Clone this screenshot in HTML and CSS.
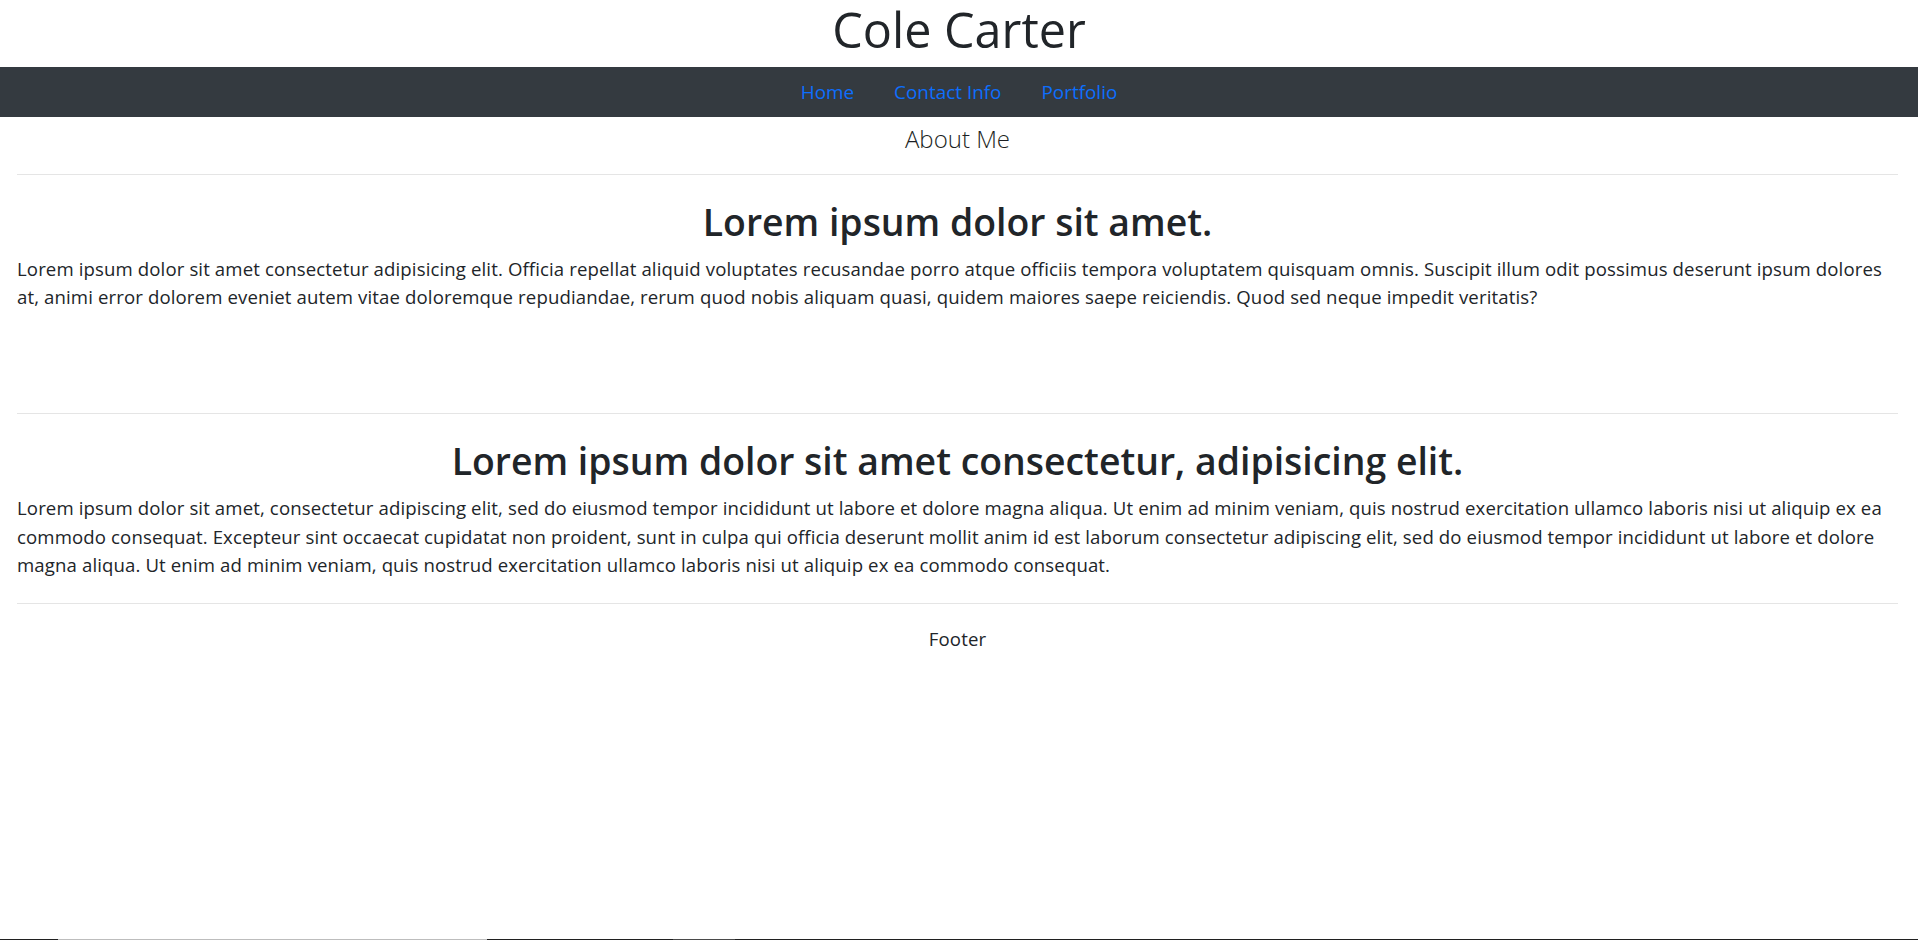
FILE: index.html
```html
<!DOCTYPE html>
<html lang="en">
<head>
<meta charset="utf-8">
<title>Cole Carter</title>
<link rel="stylesheet" href="styles.css">
</head>
<body>
<header class="site-header">
  <h1 class="site-title">Cole Carter</h1>
</header>
<nav class="navbar">
  <a class="nav-link" href="#">Home</a>
  <a class="nav-link" href="#">Contact Info</a>
  <a class="nav-link" href="#">Portfolio</a>
</nav>
<main class="container">
  <p class="lead">About Me</p>
  <hr class="rule">
  <section class="section section-first">
    <h2 class="section-title">Lorem ipsum dolor sit amet.</h2>
    <p class="section-text">Lorem ipsum dolor sit amet consectetur adipisicing elit. Officia repellat aliquid voluptates recusandae porro atque officiis tempora voluptatem quisquam omnis. Suscipit illum odit possimus deserunt ipsum dolores at, animi error dolorem eveniet autem vitae doloremque repudiandae, rerum quod nobis aliquam quasi, quidem maiores saepe reiciendis. Quod sed neque impedit veritatis?</p>
  </section>
  <hr class="rule">
  <section class="section">
    <h2 class="section-title">Lorem ipsum dolor sit amet consectetur, adipisicing elit.</h2>
    <p class="section-text">Lorem ipsum dolor sit amet, consectetur adipiscing elit, sed do eiusmod tempor incididunt ut labore et dolore magna aliqua. Ut enim ad minim veniam, quis nostrud exercitation ullamco laboris nisi ut aliquip ex ea commodo consequat. Excepteur sint occaecat cupidatat non proident, sunt in culpa qui officia deserunt mollit anim id est laborum consectetur adipiscing elit, sed do eiusmod tempor incididunt ut labore et dolore magna aliqua. Ut enim ad minim veniam, quis nostrud exercitation ullamco laboris nisi ut aliquip ex ea commodo consequat.</p>
  </section>
  <hr class="rule">
  <footer class="footer">Footer</footer>
</main>
<div class="taskbar-edge">
  <span class="seg seg-dark seg-a"></span>
  <span class="seg seg-light seg-b"></span>
  <span class="seg seg-dark seg-c"></span>
  <span class="seg seg-mid seg-d"></span>
  <span class="seg seg-dark seg-e"></span>
</div>
</body>
</html>
```
FILE: styles.css
```css
* { box-sizing: border-box; }

html, body {
  margin: 0;
  padding: 0;
  background: #ffffff;
}

body {
  font-family: "Open Sans", "Noto Sans", sans-serif;
  font-size: 18.6px;
  letter-spacing: 0.12px;
  line-height: 28.8px;
  color: #212529;
}

.site-header {
  margin: 0 0 9px;
}

.site-title {
  margin: 0;
  font-size: 48.5px;
  line-height: 58px;
  font-weight: 500;
  letter-spacing: 0;
  text-align: center;
  color: #212529;
}

.navbar {
  height: 50px;
  background: #343a40;
  display: flex;
  justify-content: center;
  align-items: center;
  gap: 40px;
}

.nav-link {
  color: #0d6efd;
  text-decoration: none;
  font-size: 18.9px;
  letter-spacing: 0;
  line-height: 28.8px;
}

.container {
  padding: 0 20px 0 17px;
}

.lead {
  margin: 4px 0 17px;
  font-size: 24px;
  line-height: 36px;
  font-weight: 300;
  letter-spacing: 0;
  text-align: center;
  color: #1c1f23;
}

.rule {
  margin: 0;
  border: 0;
  border-top: 1px solid rgba(0, 0, 0, 0.1);
  height: 0;
}

.section {
  padding-top: 24px;
}

.section-first {
  padding-bottom: 78px;
}

.section-title {
  margin: 0 0 9.6px;
  font-size: 37.4px;
  line-height: 46px;
  font-weight: 600;
  letter-spacing: 0;
  text-align: center;
  color: #212529;
}

.section-text {
  margin: 0 0 23px;
}

.footer {
  padding-top: 20.5px;
  text-align: center;
}

.taskbar-edge {
  position: fixed;
  left: 0;
  right: 0;
  bottom: 0;
  height: 1px;
  display: flex;
}

.seg { display: block; height: 1px; }
.seg-dark { background: #202020; }
.seg-light { background: #bdbdbd; }
.seg-mid { background: #4a4a4a; }
.seg-a { width: 58px; }
.seg-b { width: 429px; }
.seg-c { width: 186px; }
.seg-d { width: 62px; }
.seg-e { flex: 1; }
```
